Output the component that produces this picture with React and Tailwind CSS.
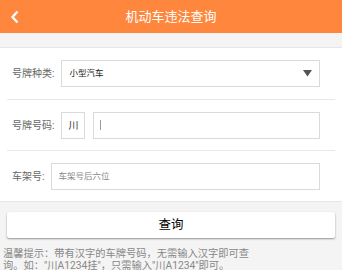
import React from 'react';

const font = { fontFamily: 'Roboto, "Noto Sans CJK SC", sans-serif' };

function Row({ label, children, h, last }) {
  return (
    <div className={`mx-[7px] flex items-center pl-[5px] pr-[15px] ${h} ${last ? '' : 'border-b border-[#e8e8e8]'}`}>
      <span className="text-[10px] text-[#666] whitespace-nowrap">{label}</span>
      <div className="flex flex-1 items-center gap-[8px] ml-[7px]">{children}</div>
    </div>
  );
}

export default function App() {
  return (
    <div className="w-[342px] h-[270px] bg-[#f4f4f4] overflow-hidden" style={font}>
      <header className="h-[33px] bg-[#ff863d] grid grid-cols-[40px_1fr_40px] items-center">
        <svg width="10" height="14" viewBox="0 0 10 14" className="ml-[10px]">
          <path d="M7.5 1.5 L2.5 7 L7.5 12.5" fill="none" stroke="#fff" strokeWidth="2.4" strokeLinejoin="miter" />
        </svg>
        <h1 className="text-center text-[13px] text-white">机动车违法查询</h1>
        <span />
      </header>

      <div className="h-[14px]" />

      <div className="bg-white border-t border-b border-[#e6e6e6]">
        <Row label="号牌种类:" h="h-[52px]">
          <div className="flex-1 h-[27px] border border-[#dadada] flex items-center justify-between pl-[7px] pr-[7px]">
            <span className="text-[8.5px] text-[#222]">小型汽车</span>
            <svg width="9" height="7" viewBox="0 0 9 7">
              <path d="M0 0 H9 L4.5 6.5 Z" fill="#555" />
            </svg>
          </div>
        </Row>
        <Row label="号牌号码:" h="h-[51px]">
          <div className="w-[24px] h-[27px] border border-[#dadada] flex items-center justify-center text-[10px] text-[#333]">川</div>
          <div className="flex-1 h-[27px] border border-[#dadada] flex items-center pl-[6px]">
            <span className="w-px h-[10px] bg-[#999]" />
          </div>
        </Row>
        <Row label="车架号:" h="h-[50px]" last>
          <div className="flex-1 h-[27px] border border-[#dadada] flex items-center pl-[6px]">
            <span className="text-[8.5px] text-[#888]">车架号后六位</span>
          </div>
        </Row>
      </div>

      <button className="mx-[7px] mt-[10px] w-[328px] h-[26px] bg-white rounded-[2px] shadow-[0_1px_2px_rgba(0,0,0,0.4)] text-[12.5px] text-black font-normal flex items-center justify-center">
        查询
      </button>

      <p className="mt-[10px] px-[3px] text-[10.25px] leading-[12px] text-[#888]">
        温馨提示：带有汉字的车牌号码，无需输入汉字即可查
        <br />
        询。如："川A1234挂"，只需输入"川A1234"即可。
      </p>
    </div>
  );
}
